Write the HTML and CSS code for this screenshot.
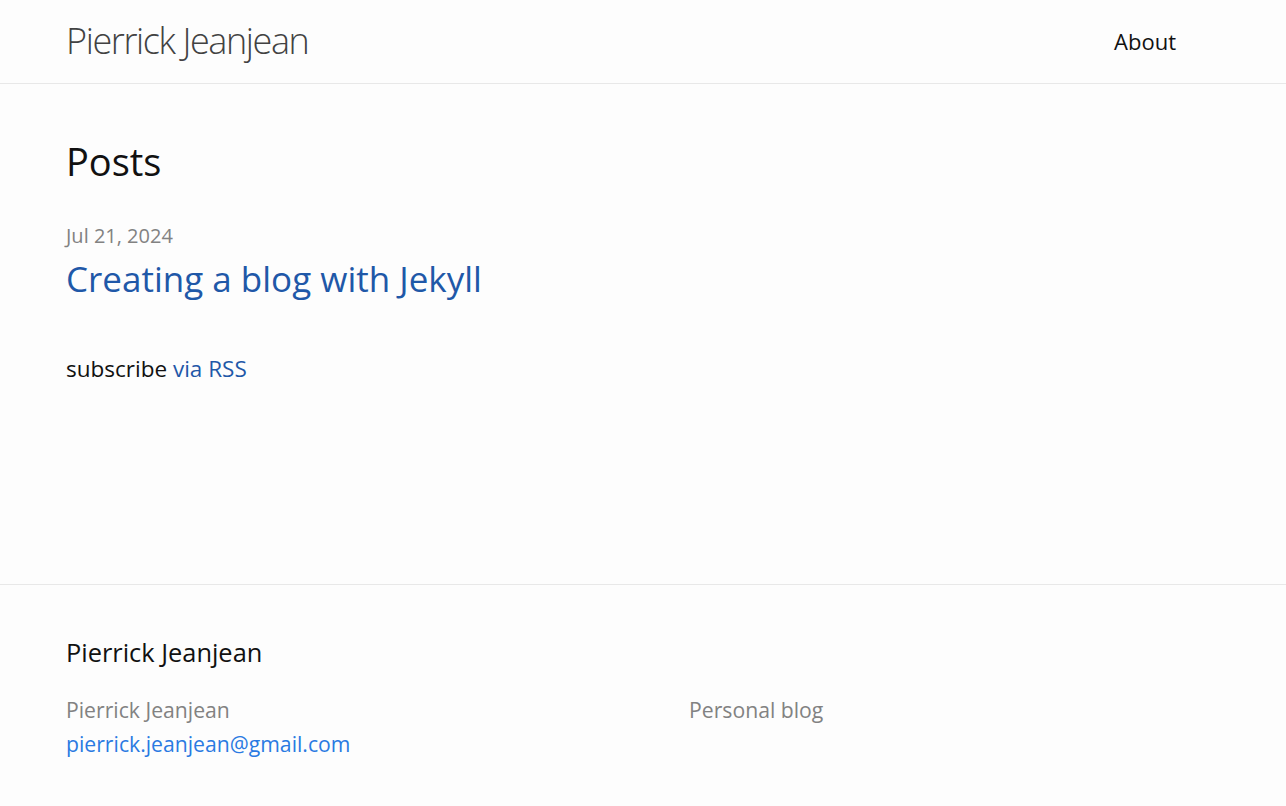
FILE: index.html
```html
<!DOCTYPE html>
<html lang="en">
<head>
<meta charset="utf-8">
<title>Pierrick Jeanjean</title>
<link rel="stylesheet" href="styles.css">
</head>
<body>
<header class="site-header">
  <div class="wrapper header-inner">
    <a class="site-title" href="#">Pierrick Jeanjean</a>
    <nav class="site-nav"><a class="page-link" href="#">About</a></nav>
  </div>
</header>
<main class="page-content">
  <div class="wrapper">
    <h2 class="post-list-heading">Posts</h2>
    <ul class="post-list">
      <li>
        <span class="post-meta">Jul 21, 2024</span>
        <h3 class="post-title"><a class="post-link" href="#">Creating a blog with Jekyll</a></h3>
      </li>
    </ul>
    <p class="rss-subscribe">subscribe <a class="visited" href="#">via RSS</a></p>
  </div>
</main>
<footer class="site-footer">
  <div class="wrapper">
    <h2 class="footer-heading">Pierrick Jeanjean</h2>
    <div class="footer-cols">
      <ul class="contact-list">
        <li>Pierrick Jeanjean</li>
        <li><a class="email" href="#">pierrick.jeanjean@gmail.com</a></li>
      </ul>
      <p class="footer-desc">Personal blog</p>
    </div>
  </div>
</footer>
</body>
</html>
```

FILE: styles.css
```css
html, body {
  margin: 0;
  padding: 0;
}
body {
  background: #fdfdfd;
  color: #111;
  font-family: "Open Sans", "Noto Sans", sans-serif;
  font-size: 22px;
  line-height: 1.5;
  min-height: 806px;
  display: flex;
  flex-direction: column;
}
a { text-decoration: none; }
.wrapper {
  padding: 0 66px;
}
.site-header {
  border-bottom: 1px solid #e8e8e8;
  height: 84px;
  box-sizing: border-box;
}
.header-inner {
  display: flex;
  justify-content: space-between;
  align-items: center;
  height: 100%;
  padding-right: 110px;
}
.site-title {
  font-size: 36px;
  font-weight: 300;
  letter-spacing: -1.4px;
  color: #424242;
  line-height: 1;
  padding-bottom: 2px;
}
.page-link {
  color: #111;
  font-size: 22px;
  line-height: 1;
}
.page-content {
  flex: 1;
  padding-top: 49px;
}
.post-list-heading {
  font-size: 38px;
  font-weight: 400;
  margin: 0 0 31px;
}
.post-list {
  list-style: none;
  margin: 0;
  padding: 0;
}
.post-meta {
  font-size: 20px;
  color: #828282;
  display: block;
}
.post-title {
  font-size: 35px;
  font-weight: 400;
  margin: 2px 0 0;
  line-height: 1.5;
}
.post-link { color: #1f58a8; }
.rss-subscribe {
  margin: 46px 0 0;
  font-size: 22.5px;
  line-height: 33px;
}
.visited { color: #1f58a8; }
.site-footer {
  border-top: 1px solid #e8e8e8;
  padding-top: 48px;
  height: 222px;
  box-sizing: border-box;
}
.footer-heading {
  font-size: 25.4px;
  font-weight: 400;
  margin: 0 0 22px;
}
.footer-cols {
  display: grid;
  grid-template-columns: 623px 1fr;
  color: #828282;
  font-size: 21.2px;
  line-height: 34px;
}
.contact-list {
  list-style: none;
  margin: 0;
  padding: 0;
}
.email { color: #2a7ae2; }
.footer-desc { margin: 0; }
```
